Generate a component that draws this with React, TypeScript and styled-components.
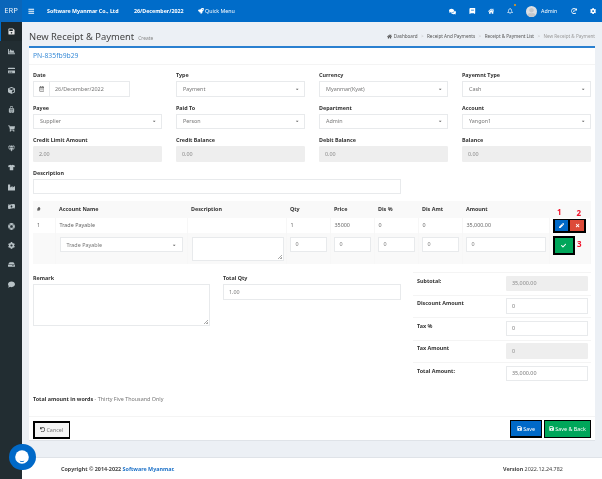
import React from "react";
import styled, { createGlobalStyle } from "styled-components";
import {
  FaBars, FaRocket, FaComments, FaBook, FaHome, FaRegBell, FaHistory, FaCog, FaSave, FaChartArea, FaCreditCard,
  FaCube, FaSuitcaseRolling, FaShoppingCart, FaGem, FaTshirt, FaIndustry, FaMoneyBillWave, FaLifeRing, FaHdd, FaComment,
  FaRegCalendarAlt, FaCaretDown, FaPen, FaTimes, FaCheck, FaUndo, FaUser,
} from "react-icons/fa";

const Global = createGlobalStyle`
  html, body { margin: 0; padding: 0; background: #ecf0f5; }
  * { box-sizing: border-box; }
  body { font-family: "Noto Sans", "Open Sans", sans-serif; color: #333; }
`;

const Page = styled.div`
  position: relative; width: 602px; height: 479px; overflow: hidden; background: #ecf0f5;
  filter: blur(0.25px);
`;
const Header = styled.header`
  position: absolute; left: 0; top: 0; width: 602px; height: 22px; background: #006cc9; color: #fff;
`;
const Brand = styled.div`
  position: absolute; left: 0; top: 0; width: 22px; height: 22px; background: #0a66ba;
  font-size: 7.6px; line-height: 21px; text-align: center; color: #e6f0fa;
`;
const HeadItem = styled.span<{ $x: number; $bold?: boolean; $size?: number }>`
  position: absolute; left: ${(p) => p.$x}px; top: 0; height: 22px; display: flex; align-items: center; white-space: nowrap;
  font-size: ${(p) => p.$size ?? 5.3}px; font-weight: ${(p) => (p.$bold ? 700 : 400)};
`;
const NotifyDot = styled.i`
  position: absolute; left: 514px; top: 4px; width: 2px; height: 2px; border-radius: 50%; background: #f39c12;
`;
const Avatar = styled.span`
  position: absolute; left: 526px; top: 6px; width: 11px; height: 11px; border-radius: 50%; background: #dcdfe3;
  display: flex; align-items: flex-end; justify-content: center; overflow: hidden; color: #c3c7cc; font-size: 9px;
`;
const Sidebar = styled.nav`
  position: absolute; left: 0; top: 22px; width: 22px; height: 457px; background: #222d32;
  display: flex; flex-direction: column;
`;
const SideItem = styled.div<{ $active?: boolean }>`
  height: 19.45px; flex: none; display: flex; align-items: center; justify-content: center; font-size: 7px;
  background: ${(p) => (p.$active ? "#1e282c" : "transparent")};
  border-left: 1px solid ${(p) => (p.$active ? "#006cc9" : "transparent")};
  color: ${(p) => (p.$active ? "#e4e4e4" : "#b8c2c6")};
`;
const TitleBar = styled.div`
  position: absolute; left: 29px; top: 26px; width: 566px; height: 20px;
  display: flex; align-items: center; justify-content: space-between;
`;
const Title = styled.h1`
  margin: 0; font-size: 9.4px; font-weight: 400; color: #444; white-space: nowrap;
  small { font-size: 4.9px; color: #888; margin-left: 4px; }
`;
const Crumbs = styled.div`
  display: flex; align-items: center; font-size: 4.6px; color: #555; white-space: nowrap;
  svg { font-size: 5px; margin-right: 2px; }
  em { font-style: normal; color: #bbb; margin: 0 3.4px; }
  b { font-weight: 400; color: #999; }
`;
const Box = styled.main`
  position: absolute; left: 29px; top: 46px; width: 566px; height: 395px; background: #fff;
  border-top: 2px solid #2a80d0; border-bottom: 1px solid #dfe3e8;
`;
const BoxHead = styled.div`
  height: 17px; border-bottom: 1px solid #f4f4f4; padding-left: 4px;
  font-size: 6.8px; line-height: 16px; color: #3c8dd8;
`;
const FormGrid = styled.div`
  position: absolute; left: 4px; top: 23px; width: 558px;
  display: grid; grid-template-columns: repeat(4, 129px); column-gap: 14px; row-gap: 7.17px;
`;
const Field = styled.div<{ $span?: number }>`
  grid-column: span ${(p) => p.$span ?? 1};
`;
const Label = styled.label`
  display: block; height: 10px; font-size: 5.4px; line-height: 9px; font-weight: 700; color: #333; white-space: nowrap;
`;
const inputBase = `
  height: 15.5px; border: 1px solid #e8eaec; background: #fff; font-size: 5.4px; color: #777;
  display: flex; align-items: center; padding: 0 5px; white-space: nowrap;
`;
const Input = styled.div<{ $ro?: boolean; $w?: number }>`
  ${inputBase}
  ${(p) => (p.$w ? `width:${p.$w}px;` : "")}
  ${(p) => (p.$ro ? "background:#eeeeee;border-color:#eeeeee;border-radius:1px;color:#888;" : "")}
`;
const DateGroup = styled.div`
  width: 97px; height: 15.5px; display: flex; border: 1px solid #e8eaec; font-size: 5.4px; color: #777; align-items: center;
  span { width: 16px; height: 100%; display: flex; align-items: center; justify-content: center; border-right: 1px solid #e8eaec; font-size: 5.5px; color: #555; }
  div { padding-left: 5px; }
`;
const Select = styled.div<{ $w?: number }>`
  ${inputBase}
  justify-content: space-between; padding: 0 5px 0 6px;
  ${(p) => (p.$w ? `width:${p.$w}px;` : "")}
  svg { font-size: 4.4px; color: #666; }
`;
const Table = styled.table`
  position: absolute; left: 4px; top: 153px; width: 558px; border-collapse: collapse; table-layout: fixed; font-size: 5.4px;
  th { height: 16.7px; background: #f9f9f9; text-align: left; font-weight: 700; padding: 0 4px; color: #333; }
  td { padding: 0 4px; color: #666; border-right: 1px solid #f7f7f7; }
  tbody tr:first-child td { height: 15.3px; background: #fff; }
  tbody tr:last-child td { height: 31.5px; background: #f9f9f9; vertical-align: top; padding-top: 4px; }
`;
const CellInput = styled.div`
  ${inputBase}
  height: 15px; padding-left: 5px; color: #777; margin-left: -1px; margin-right: -1px; background: #fff;
`;
const Area = styled.div<{ $w: number; $h: number }>`
  width: ${(p) => p.$w}px; height: ${(p) => p.$h}px; border: 1px solid #e8eaec; background: #fff; position: relative;
  &::after {
    content: ""; position: absolute; right: 1px; bottom: 1px; width: 4px; height: 4px;
    background: linear-gradient(135deg, transparent 50%, #aaa 50%, #aaa 60%, transparent 60%, transparent 75%, #aaa 75%);
  }
`;
const Outline = styled.div<{ $x: number; $y: number; $w: number; $h: number }>`
  position: absolute; left: ${(p) => p.$x - 29}px; top: ${(p) => p.$y - 48}px; width: ${(p) => p.$w}px; height: ${(p) => p.$h}px;
  background: #000; padding: 1.5px; display: flex; gap: 2px; font-size: 5.4px;
`;
const Btn = styled.div<{ $bg: string; $fg?: string }>`
  flex: 1; min-width: 0; background: ${(p) => p.$bg}; color: ${(p) => p.$fg ?? "#fff"}; display: flex; align-items: center; justify-content: center; gap: 1.5px; white-space: nowrap;
  svg { font-size: 5.2px; flex: none; }
`;
const RedMark = styled.span<{ $x: number; $y: number }>`
  position: absolute; left: ${(p) => p.$x - 29}px; top: ${(p) => p.$y - 48}px; font-size: 8px; line-height: 10px; font-weight: 700; color: #f0142c;
`;
const RemarkBlock = styled.div`
  position: absolute; left: 4px; top: 226px;
`;
const QtyBlock = styled.div`
  position: absolute; left: 194px; top: 226px; width: 178px;
`;
const Summary = styled.div`
  position: absolute; left: 384px; top: 224px; width: 178px;
`;
const SumRow = styled.div`
  height: 22.5px; border-top: 1px solid #f4f4f4; padding: 2.5px 3px 0 4px; display: flex; justify-content: space-between;
  font-size: 5.4px; font-weight: 700; color: #333;
  span { line-height: 10px; }
  > div { font-weight: 400; height: 15.5px; }
`;
const Words = styled.div`
  position: absolute; left: 4px; top: 346px; font-size: 5.4px; line-height: 10px; color: #777; white-space: nowrap;
  b { color: #333; }
`;
const BoxFoot = styled.div`
  position: absolute; left: 0; top: 368px; width: 100%; border-top: 1px solid #f4f4f4;
`;
const Footer = styled.footer`
  position: absolute; left: 22px; top: 456.5px; width: 580px; height: 23px; background: #fff; border-top: 1px solid #dfe3e8;
  font-size: 5.4px; color: #444;
`;
const FootLeft = styled.div`
  position: absolute; left: 39px; top: 6px; line-height: 10px; font-weight: 700; white-space: nowrap;
  a { color: #1e72c8; }
`;
const FootRight = styled.div`
  position: absolute; left: 481px; top: 6px; line-height: 10px; white-space: nowrap;
`;
const Chat = styled.div`
  position: absolute; left: 9px; top: 443.5px; width: 26.5px; height: 26.5px; border-radius: 50%; background: #0069c8;
  display: flex; align-items: center; justify-content: center;
`;

const sideIcons = [FaSave, FaChartArea, FaCreditCard, FaCube, FaSuitcaseRolling, FaShoppingCart, FaGem, FaTshirt, FaIndustry, FaMoneyBillWave, FaLifeRing, FaCog, FaHdd, FaComment];

export default function App() {
  return (
    <Page>
      <Global />
      <Header>
        <Brand>ERP</Brand>
        <HeadItem $x={28} $size={6.5}><FaBars /></HeadItem>
        <HeadItem $x={47} $bold>Software Myanmar Co., Ltd</HeadItem>
        <HeadItem $x={134} $bold>26/December/2022</HeadItem>
        <HeadItem $x={198} $size={5.8}><FaRocket /></HeadItem>
        <HeadItem $x={205}>Quick Menu</HeadItem>
        <HeadItem $x={449} $size={7}><FaComments /></HeadItem>
        <HeadItem $x={469} $size={6.6}><FaBook /></HeadItem>
        <HeadItem $x={487.5} $size={6.4}><FaHome /></HeadItem>
        <HeadItem $x={507} $size={6.2}><FaRegBell /></HeadItem>
        <NotifyDot />
        <Avatar><FaUser /></Avatar>
        <HeadItem $x={541}>Admin</HeadItem>
        <HeadItem $x={571} $size={6.2}><FaHistory style={{ transform: "scaleX(-1)" }} /></HeadItem>
        <HeadItem $x={589.5} $size={6.2}><FaCog /></HeadItem>
      </Header>
      <Sidebar>
        {sideIcons.map((Icon, i) => (
          <SideItem key={i} $active={i === 0}><Icon /></SideItem>
        ))}
      </Sidebar>
      <TitleBar>
        <Title>New Receipt &amp; Payment<small>Create</small></Title>
        <Crumbs>
          <FaHome />Dashboard<em>&gt;</em>Receipt And Payments<em>&gt;</em>Receipt &amp; Payment List<em>&gt;</em><b>New Receipt &amp; Payment</b>
        </Crumbs>
      </TitleBar>
      <Box>
        <BoxHead>PN-835fb9b29</BoxHead>
        <FormGrid>
          <Field><Label>Date</Label><DateGroup><span><FaRegCalendarAlt /></span><div>26/December/2022</div></DateGroup></Field>
          <Field><Label>Type</Label><Select>Payment<FaCaretDown /></Select></Field>
          <Field><Label>Currency</Label><Select>Myanmar(Kyat)<FaCaretDown /></Select></Field>
          <Field><Label>Payemnt Type</Label><Select>Cash<FaCaretDown /></Select></Field>
          <Field><Label>Payee</Label><Select>Supplier<FaCaretDown /></Select></Field>
          <Field><Label>Paid To</Label><Select>Person<FaCaretDown /></Select></Field>
          <Field><Label>Department</Label><Select>Admin<FaCaretDown /></Select></Field>
          <Field><Label>Account</Label><Select>Yangon1<FaCaretDown /></Select></Field>
          <Field><Label>Credit Limit Amount</Label><Input $ro>2.00</Input></Field>
          <Field><Label>Credit Balance</Label><Input $ro>0.00</Input></Field>
          <Field><Label>Debit Balance</Label><Input $ro>0.00</Input></Field>
          <Field><Label>Balance</Label><Input $ro>0.00</Input></Field>
          <Field $span={3}><Label>Description</Label><Input $w={368} /></Field>
        </FormGrid>
        <Table>
          <colgroup>
            <col style={{ width: 22 }} /><col style={{ width: 132 }} /><col style={{ width: 99 }} /><col style={{ width: 44 }} />
            <col style={{ width: 44 }} /><col style={{ width: 44 }} /><col style={{ width: 44 }} /><col style={{ width: 87 }} /><col />
          </colgroup>
          <thead>
            <tr><th>#</th><th>Account Name</th><th>Description</th><th>Qty</th><th>Price</th><th>Dis %</th><th>Dis Amt</th><th>Amount</th><th /></tr>
          </thead>
          <tbody>
            <tr><td>1</td><td>Trade Payable</td><td /><td>1</td><td>35000</td><td>0</td><td>0</td><td>35,000.00</td><td /></tr>
            <tr>
              <td />
              <td><Select>Trade Payable<FaCaretDown /></Select></td>
              <td><Area $w={92} $h={24} /></td>
              <td><CellInput>0</CellInput></td>
              <td><CellInput>0</CellInput></td>
              <td><CellInput>0</CellInput></td>
              <td><CellInput>0</CellInput></td>
              <td><CellInput>0</CellInput></td>
              <td />
            </tr>
          </tbody>
        </Table>
        <Outline $x={553} $y={218.5} $w={32.5} $h={14}>
          <Btn $bg="#0069c8"><FaPen /></Btn>
          <Btn $bg="#dd4b39"><FaTimes /></Btn>
        </Outline>
        <Outline $x={553} $y={236} $w={21.5} $h={18.5}>
          <Btn $bg="#00a65a"><FaCheck /></Btn>
        </Outline>
        <RedMark $x={557} $y={207}>1</RedMark>
        <RedMark $x={576.5} $y={208}>2</RedMark>
        <RedMark $x={577} $y={239}>3</RedMark>
        <RemarkBlock><Label>Remark</Label><Area $w={177} $h={42} /></RemarkBlock>
        <QtyBlock><Label>Total Qty</Label><Input>1.00</Input></QtyBlock>
        <Summary>
          <SumRow><span>Subtotal:</span><Input $ro $w={82}>35,000.00</Input></SumRow>
          <SumRow><span>Discount Amount</span><Input $w={82}>0</Input></SumRow>
          <SumRow><span>Tax %</span><Input $w={82}>0</Input></SumRow>
          <SumRow><span>Tax Amount</span><Input $ro $w={82}>0</Input></SumRow>
          <SumRow><span>Total Amount:</span><Input $w={82}>35,000.00</Input></SumRow>
        </Summary>
        <Words><b>Total amount in words</b> - Thirty Five Thousand Only</Words>
        <BoxFoot />
        <Outline $x={33} $y={421} $w={37} $h={17.5}>
          <Btn $bg="#f4f4f4" $fg="#777"><FaUndo style={{ color: "#444" }} />Cancel</Btn>
        </Outline>
        <Outline $x={509.5} $y={419.5} $w={32.5} $h={18}>
          <Btn $bg="#0069c8"><FaSave />Save</Btn>
        </Outline>
        <Outline $x={543.5} $y={419.5} $w={47.5} $h={18.5}>
          <Btn $bg="#00a65a"><FaSave />Save &amp; Back</Btn>
        </Outline>
      </Box>
      <Footer>
        <FootLeft>Copyright © 2014-2022 <a>Software Myanmar.</a></FootLeft>
        <FootRight><b>Version</b> 2022.12.24.782</FootRight>
      </Footer>
      <Chat>
        <svg width="14" height="14" viewBox="0 0 14 14">
          <circle cx="7" cy="7" r="6.8" fill="#fff" />
          <path d="M4.6 10.4c1.4 1 3.4 1 4.8 0-.4 1.2-1.4 1.5-2.4 1.5-1.1 0-2-.4-2.4-1.5z" fill="#0069c8" />
        </svg>
      </Chat>
    </Page>
  );
}
